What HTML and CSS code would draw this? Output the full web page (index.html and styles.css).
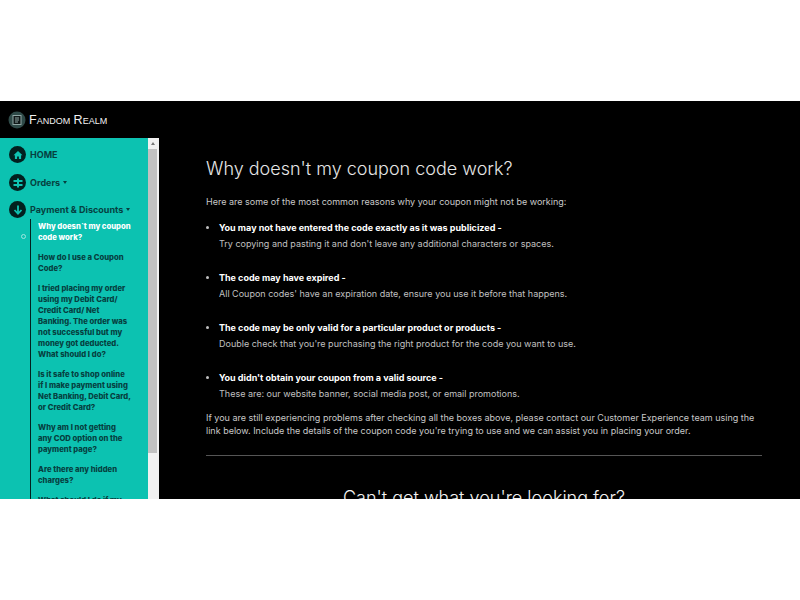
FILE: index.html
```html
<!DOCTYPE html>
<html lang="en">

<head>
    <meta charset="UTF-8">
    <meta name="viewport" content="width=device-width, initial-scale=1.0">
    <title>Fandom Realm - Help</title>
    <link rel="stylesheet" href="styles.css">
</head>

<body>

    <div class="app">
        <header class="topbar">
            <svg class="logo" width="18" height="18" viewBox="0 0 18 18">
                <circle cx="9" cy="9" r="8.5" fill="#2f4a48"/>
                <rect x="5" y="4.5" width="8" height="9" fill="#101818" stroke="#8fa5a3"/>
                <path d="M7 7h4M7 9h4M7 11h3" stroke="#8fa5a3" fill="none"/>
            </svg>
            <span class="brand">Fandom Realm</span>
        </header>

        <div class="main">
            <aside class="sidebar">
                <nav class="menu">
                    <a class="menu-item menu-home">
                        <span class="menu-icon">
                            <svg width="10" height="10" viewBox="0 0 10 10"><path d="M5 1 .5 5.2h1.4V9h2.2V6.4h1.8V9h2.2V5.2h1.4z" fill="#0fc2b2"/></svg>
                        </span>
                        HOME
                    </a>
                    <a class="menu-item menu-orders">
                        <span class="menu-icon">
                            <svg width="10" height="10" viewBox="0 0 10 10"><path d="M.5 2h9v2h-9zM.5 6h9v2h-9zM4 .5h2v9H4z" fill="#0fc2b2"/></svg>
                        </span>
                        Orders <i class="caret"></i>
                    </a>
                    <a class="menu-item menu-pay">
                        <span class="menu-icon">
                            <svg width="10" height="10" viewBox="0 0 10 10"><path d="M5 .5v8M1.5 5 5 8.7 8.5 5" stroke="#0fc2b2" stroke-width="1.8" fill="none"/></svg>
                        </span>
                        Payment &amp; Discounts <i class="caret"></i>
                    </a>
                    <ul class="submenu">
                        <li class="active">Why doesn`t my coupon code work?</li>
                        <li>How do I use a Coupon Code?</li>
                        <li>I tried placing my order using my Debit Card/ Credit Card/ Net Banking. The order was not successful but my money got deducted. What should I do?</li>
                        <li>Is it safe to shop online if I make payment using Net Banking, Debit Card, or Credit Card?</li>
                        <li>Why am I not getting any COD option on the payment page?</li>
                        <li>Are there any hidden charges?</li>
                        <li>What should I do if my payment fails?</li>
                    </ul>
                </nav>
                <div class="scrollbar">
                    <div class="scroll-arrow"></div>
                    <div class="scroll-thumb"></div>
                </div>
            </aside>

            <main class="content">
                <h1>Why doesn't my coupon code work?</h1>
                <p class="intro">Here are some of the most common reasons why your coupon might not be working:</p>
                <ul class="reasons">
                    <li><strong>You may not have entered the code exactly as it was publicized -</strong><br>Try copying and pasting it and don't leave any additional characters or spaces.</li>
                    <li><strong>The code may have expired -</strong><br>All Coupon codes' have an expiration date, ensure you use it before that happens.</li>
                    <li><strong>The code may be only valid for a particular product or products -</strong><br>Double check that you're purchasing the right product for the code you want to use.</li>
                    <li><strong>You didn't obtain your coupon from a valid source -</strong><br>These are: our website banner, social media post, or email promotions.</li>
                </ul>
                <p class="outro">If you are still experiencing problems after checking all the boxes above, please contact our Customer Experience team using the link below. Include the details of the coupon code you're trying to use and we can assist you in placing your order.</p>
                <hr>
                <h2>Can't get what you're looking for?</h2>
            </main>
        </div>
    </div>

</body>

</html>
```

FILE: styles.css
```css
body {
    margin: 0;
    padding: 101px 0;
    background-color: #fff;
    font-family: 'Inter', 'Noto Sans', sans-serif;
}

.app {
    height: 398px;
    overflow: hidden;
    display: flex;
    flex-direction: column;
    background-color: #000;
    color: #ddd;
}

.topbar {
    height: 37px;
    flex: none;
    display: flex;
    align-items: center;
    gap: 3px;
    padding-left: 8px;
}

.brand {
    font-family: 'Liberation Sans', sans-serif;
    font-variant: small-caps;
    font-size: 12.5px;
    color: #f2f2f2;
}

.main {
    flex: 1;
    display: flex;
    min-height: 0;
}

.sidebar {
    width: 159px;
    flex: none;
    display: flex;
    overflow: hidden;
}

.menu {
    width: 148px;
    flex: none;
    background-color: #0cc2b1;
    padding-top: 8px;
    box-sizing: border-box;
}

.menu-item {
    display: flex;
    align-items: center;
    gap: 4px;
    padding-left: 9px;
    font-size: 9px;
    font-weight: 700;
    color: #06403f;
}

.menu-home {
    margin-bottom: 11px;
}

.menu-orders {
    margin-bottom: 10px;
}

.menu-icon {
    width: 17px;
    height: 17px;
    border-radius: 50%;
    background-color: #02201f;
    display: flex;
    align-items: center;
    justify-content: center;
}

.caret {
    display: inline-block;
    border-left: 2.5px solid transparent;
    border-right: 2.5px solid transparent;
    border-top: 3px solid #06403f;
    margin-left: -1px;
}

.submenu {
    list-style: none;
    margin: 1px 0 0 30px;
    padding: 2px 0 0 7px;
    border-left: 1.5px solid #02201f;
}

.submenu li {
    width: 93px;
    font-size: 7.7px;
    font-weight: 800;
    line-height: 11px;
    margin-bottom: 9px;
    color: #06403f;
}

.submenu li.active {
    position: relative;
    color: #fff;
}

.submenu li.active::before {
    content: "";
    position: absolute;
    left: -17px;
    top: 13px;
    width: 3px;
    height: 3px;
    border: 1px solid #9fe6df;
    border-radius: 50%;
}

.scrollbar {
    width: 11px;
    flex: none;
    background-color: #f1f1f1;
}

.scroll-arrow {
    height: 11px;
    position: relative;
}

.scroll-arrow::after {
    content: "";
    position: absolute;
    left: 3px;
    top: 4px;
    border-left: 2.5px solid transparent;
    border-right: 2.5px solid transparent;
    border-bottom: 3px solid #777;
}

.scroll-thumb {
    width: 9px;
    height: 304px;
    background-color: #c1c1c1;
}

.content {
    flex: 1;
    padding: 20px 38px 0 47px;
    min-width: 0;
}

h1 {
    margin: 0 0 15px;
    font-size: 18px;
    font-weight: 300;
    line-height: 22px;
    color: #e6e6e6;
}

.intro,
.outro {
    margin: 0;
    font-size: 9px;
    line-height: 13px;
    color: #c9c9c9;
}

.reasons {
    margin: 12px 0 9px;
    padding-left: 13px;
    font-size: 9px;
    line-height: 16px;
    color: #c0c0c0;
}

.reasons li {
    margin-bottom: 18px;
}

.reasons li:last-child {
    margin-bottom: 0;
}

.reasons strong {
    color: #fff;
    font-weight: 700;
}

hr {
    margin: 18px 0 31px;
    border: 0;
    border-top: 1px solid #555;
}

h2 {
    margin: 0;
    text-align: center;
    font-size: 18px;
    font-weight: 300;
    color: #f2f2f2;
}
```
